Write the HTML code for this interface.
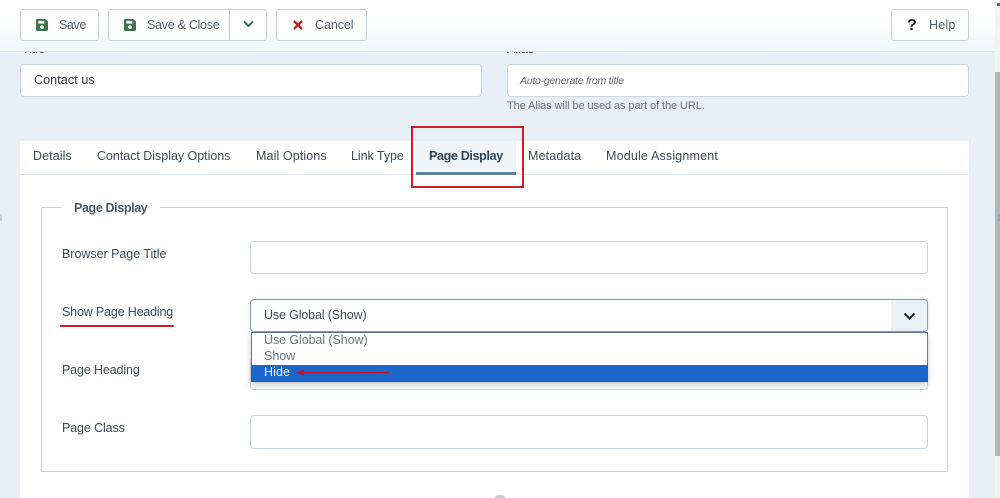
<!DOCTYPE html>
<html><head><meta charset="utf-8">
<style>
html,body{margin:0;padding:0}
body{width:1000px;height:498px;overflow:hidden;position:relative;background:#e9eff6;font-family:"Liberation Sans",sans-serif;font-size:12.5px;color:#3d4a57}
.a{position:absolute;box-sizing:border-box}
.t{position:absolute;white-space:nowrap;line-height:16px}
.btn{position:absolute;box-sizing:border-box;background:#fff;border:1px solid #c8d0d8;border-radius:3px;top:9px;height:32px}
.inp{position:absolute;box-sizing:border-box;background:#fff;border:1px solid #ccd4dc;border-radius:4px}
svg{position:absolute;display:block}
</style></head><body>

<div class="t" style="left:22px;top:41px;color:#333">Title</div>
<div class="t" style="left:507px;top:41px;color:#333">Alias</div>

<div class="a" style="left:0;top:0;width:995px;height:52px;background:linear-gradient(#fff 40%,#f1f5f9);border-bottom:1px solid #dfe5eb"></div>
<div class="a" style="left:995px;top:0;width:5px;height:72px;background:#f1f3f5"></div>
<div class="a" style="left:997px;top:3px;width:3px;height:3px;background:#666"></div>
<div class="a" style="left:995px;top:72px;width:5px;height:384px;background:#b4b6b8"></div>
<div class="a" style="left:995px;top:456px;width:5px;height:42px;background:#f1f3f5"></div>

<div class="btn" style="left:20px;width:79px"></div>
<svg style="left:36px;top:19px" width="12" height="12" viewBox="0 0 13 13"><path fill="#3f7350" d="M1.500 0H10l3 3v8.500A1.500 1.500 0 0 1 11.500 13h-10A1.500 1.500 0 0 1 0 11.500v-10A1.500 1.500 0 0 1 1.500 0Z"/><rect x="2.500" y="2" width="6.500" height="3" fill="#fff"/><circle cx="6.500" cy="8.800" r="2" fill="#fff"/></svg>
<div class="t" style="left:59px;top:17px;letter-spacing:-.4px;color:#555f69">Save</div>

<div class="btn" style="left:108px;width:159px"></div>
<div class="a" style="left:229px;top:9px;width:1px;height:32px;background:#c8d0d8"></div>
<svg style="left:124px;top:19px" width="12" height="12" viewBox="0 0 13 13"><path fill="#3f7350" d="M1.500 0H10l3 3v8.500A1.500 1.500 0 0 1 11.500 13h-10A1.500 1.500 0 0 1 0 11.500v-10A1.500 1.500 0 0 1 1.500 0Z"/><rect x="2.500" y="2" width="6.500" height="3" fill="#fff"/><circle cx="6.500" cy="8.800" r="2" fill="#fff"/></svg>
<div class="t" style="left:147px;top:17px;letter-spacing:-.28px;color:#555f69">Save &amp; Close</div>
<svg style="left:243px;top:20px" width="11" height="8" viewBox="0 0 11 8"><path d="M1 1.500 5.500 6 10 1.500" fill="none" stroke="#3f6c55" stroke-width="2"/></svg>

<div class="btn" style="left:276px;width:91px"></div>
<svg style="left:293px;top:20px" width="10" height="10" viewBox="0 0 10 10"><path d="M1 1 9 9M9 1 1 9" stroke="#b52727" stroke-width="2.400"/></svg>
<div class="t" style="left:315px;top:17px;letter-spacing:-.07px;color:#555f69">Cancel</div>

<div class="btn" style="left:891px;width:78px"></div>
<div class="t" style="left:907px;top:18px;font-size:16px;font-weight:bold;color:#222">?</div>
<div class="t" style="left:929px;top:17px;letter-spacing:.2px;color:#555f69">Help</div>

<div class="inp" style="left:20px;top:64px;width:462px;height:33px"></div>
<div class="t" style="left:34px;top:72px;color:#333;letter-spacing:.1px">Contact us</div>
<div class="inp" style="left:507px;top:64px;width:462px;height:33px"></div>
<div class="t" style="left:520px;top:73px;font-size:10.500px;font-style:italic;color:#666;letter-spacing:-.25px">Auto-generate from title</div>
<div class="t" style="left:507px;top:98px;font-size:11px;color:#667079;letter-spacing:-.08px">The Alias will be used as part of the URL.</div>

<div class="a" style="left:20px;top:141px;width:949px;height:357px;background:#fff"></div>
<div class="a" style="left:20px;top:174px;width:949px;height:1px;background:#e3e8ed"></div>
<div class="a" style="left:416px;top:141px;width:100px;height:34px;background:#f1f5f9"></div>
<div class="a" style="left:416px;top:172px;width:100px;height:3px;background:#5d80a8"></div>

<div class="t" style="left:33px;top:148px;letter-spacing:.1px">Details</div>
<div class="t" style="left:97px;top:148px;letter-spacing:-.03px">Contact Display Options</div>
<div class="t" style="left:256px;top:148px;letter-spacing:.1px">Mail Options</div>
<div class="t" style="left:351px;top:148px;letter-spacing:-.05px">Link Type</div>
<div class="t" style="left:429px;top:148px;font-weight:bold;color:#2f4358;letter-spacing:-.33px">Page Display</div>
<div class="t" style="left:528px;top:148px;letter-spacing:.15px">Metadata</div>
<div class="t" style="left:606px;top:148px;letter-spacing:.17px">Module Assignment</div>

<div class="a" style="left:411px;top:126px;width:113px;height:62px;border:2px solid #c62128"></div>

<div class="a" style="left:41px;top:207px;width:907px;height:265px;border:1px solid #c5d1da"></div>
<div class="a" style="left:61px;top:200px;width:99px;height:16px;background:#fff"></div>
<div class="t" style="left:74px;top:200px;font-weight:bold;color:#4d5862;letter-spacing:-.37px">Page Display</div>

<div class="t" style="left:62px;top:246px;letter-spacing:-.03px">Browser Page Title</div>
<div class="inp" style="left:250px;top:241px;width:678px;height:33px"></div>

<div class="t" style="left:62px;top:304px;letter-spacing:-.17px">Show Page Heading</div>
<div class="a" style="left:60px;top:325px;width:114px;height:2px;background:#c81e26;border-radius:1px"></div>

<div class="inp" style="left:250px;top:299px;width:678px;height:33px;border-color:#7f9fbc;background:#fff;box-shadow:0 0 3px #c9dcee"></div>
<div class="a" style="left:891px;top:300px;width:36px;height:31px;background:#eaf0f6;border-radius:0 3px 3px 0"></div>
<svg style="left:903px;top:312px" width="13" height="9" viewBox="0 0 13 9"><path d="M1.500 1.500 6.500 6.500 11.500 1.500" fill="none" stroke="#222" stroke-width="2"/></svg>
<div class="t" style="left:264px;top:307px;color:#3d4a57;letter-spacing:-.14px">Use Global (Show)</div>

<div class="t" style="left:62px;top:362px;letter-spacing:-.13px">Page Heading</div>
<div class="inp" style="left:250px;top:357px;width:678px;height:33px"></div>

<div class="a" style="left:251px;top:332px;width:677px;height:50px;background:#fff;border:1px solid #777;border-top-color:#5d7186;border-bottom:0;box-shadow:0 3px 6px rgba(90,100,110,.35)"></div>
<div class="t" style="left:264px;top:332px;color:#6b747c;letter-spacing:-.08px">Use Global (Show)</div>
<div class="t" style="left:264px;top:348px;color:#6b747c">Show</div>
<div class="a" style="left:251px;top:365px;width:677px;height:17px;background:#1a66c9;border-bottom:1px solid #33598a"></div>
<div class="t" style="left:264px;top:364px;color:#f2f6fb;letter-spacing:.1px">Hide</div>
<svg style="left:294px;top:368px" width="97" height="9" viewBox="0 0 97 9"><path d="M2 4.500 10 1.500V3.700L95 4V5.200L10 5.300V7.500Z" fill="#c3122a"/></svg>

<div class="t" style="left:62px;top:420px;letter-spacing:-.12px">Page Class</div>
<div class="inp" style="left:250px;top:415px;width:678px;height:34px"></div>

<div class="a" style="left:495px;top:495px;width:10px;height:3px;background:#c9cdd1;border-radius:5px 5px 0 0"></div>
<div class="a" style="left:0;top:214px;width:2px;height:7px;background:#c9cfd6;border-radius:0 3px 3px 0"></div>
<div class="a" style="left:998px;top:214px;width:2px;height:7px;background:#9ea3a8"></div>
</body></html>
